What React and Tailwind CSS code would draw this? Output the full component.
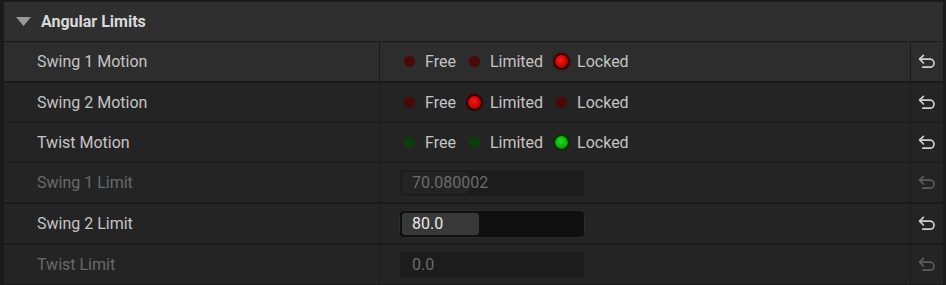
import React from "react";

const font = { fontFamily: "Roboto, 'Noto Sans', sans-serif" };

function ResetIcon({ disabled }) {
  return (
    <svg width="18" height="16" viewBox="0 0 18 16" fill="none" className={disabled ? "text-[#5c5c5c]" : "text-[#cfcfcf]"}>
      <path d="M5.4 1.4 L1.6 5.2 L5.4 9" stroke="currentColor" strokeWidth="1.7" strokeLinecap="round" strokeLinejoin="round" />
      <path d="M1.8 5.2 H12 A4 4 0 0 1 12 13.2 H4.8" stroke="currentColor" strokeWidth="1.7" strokeLinecap="round" />
    </svg>
  );
}

function Dot({ on, color }) {
  const red = color === "red";
  if (on) {
    return (
      <span className="w-[17px] h-[17px] flex items-center justify-center">
        <span
          className={
            red
              ? "w-[17px] h-[17px] rounded-full border-2 border-[#2a0303] bg-[radial-gradient(circle_at_45%_40%,#ff1a1a,#c40000_60%,#8a0000)] shadow-[0_0_2px_#6a0000]"
              : "w-[17px] h-[17px] rounded-full border-2 border-[#032a03] bg-[radial-gradient(circle_at_45%_40%,#22dd22,#0aa80a_60%,#067006)] shadow-[0_0_2px_#0a5a0a]"
          }
        />
      </span>
    );
  }
  return (
    <span className="w-[17px] h-[17px] flex items-center justify-center">
      <span className={red ? "w-[11px] h-[11px] rounded-full bg-[#4c0707]" : "w-[11px] h-[11px] rounded-full bg-[#0c3d0c]"} />
    </span>
  );
}

function Motion({ value, color }) {
  const opts = ["Free", "Limited", "Locked"];
  return (
    <div className="flex items-center gap-[10px] pl-[21px]">
      {opts.map((o) => (
        <div key={o} className="flex items-center gap-[7px]">
          <Dot on={o === value} color={color} />
          <span className="text-[16px] text-[#c4c4c4]">{o}</span>
        </div>
      ))}
    </div>
  );
}

function NumField({ value, fill, disabled }) {
  return (
    <div className="pl-[19px]">
      <div
        className={
          disabled
            ? "relative w-[186px] h-[28px] rounded-[4px] border border-[#262626] bg-[#1c1c1c] p-[2px]"
            : "relative w-[186px] h-[28px] rounded-[4px] border border-[#2c2c2c] bg-[#0f0f0f] p-[2px]"
        }
      >
        {fill > 0 && (
          <div
            className={disabled ? "h-full rounded-[3px] bg-[#232323]" : "h-full rounded-[3px] bg-[#383838]"}
            style={{ width: fill }}
          />
        )}
        <span
          className={
            disabled
              ? "absolute left-[12px] top-0 h-full flex items-center text-[16px] text-[#6c6c6c]"
              : "absolute left-[12px] top-0 h-full flex items-center text-[16px] text-[#e8e8e8]"
          }
        >
          {value}
        </span>
      </div>
    </div>
  );
}

function Row({ label, disabled, hover, children, className = "" }) {
  const bg = hover ? "bg-[#2d2d2d]" : "bg-[#242424]";
  return (
    <div className={"flex h-[39px] gap-px " + className}>
      <div className={"w-[375px] flex items-center pl-[33px] " + bg}>
        <span className={disabled ? "text-[16px] text-[#6a6a6a]" : "text-[16px] text-[#c4c4c4]"}>{label}</span>
      </div>
      <div className={"flex-1 flex items-center " + bg}>{children}</div>
      <div className={"w-[32px] flex items-center justify-center " + bg}>
        <ResetIcon disabled={disabled} />
      </div>
    </div>
  );
}

export default function App() {
  return (
    <div className="w-[946px] h-[285px] bg-[#1a1a1a] pt-[2px] pl-[4px] pr-[3px] overflow-hidden" style={font}>
      <div className="h-[39px] bg-[#2f2f2f] flex items-center">
        <svg width="15" height="9" viewBox="0 0 15 9" className="ml-[12px]">
          <path d="M0 0 H15 L7.5 9 Z" fill="#9a9a9a" />
        </svg>
        <span className="ml-[10px] text-[16px] font-bold text-[#d9d9d9]">Angular Limits</span>
      </div>
      <Row label="Swing 1 Motion" hover className="mt-px">
        <Motion value="Locked" color="red" />
      </Row>
      <Row label="Swing 2 Motion" className="mt-[2px]">
        <Motion value="Limited" color="red" />
      </Row>
      <Row label="Twist Motion" className="mt-px">
        <Motion value="Locked" color="green" />
      </Row>
      <Row label="Swing 1 Limit" disabled className="mt-px">
        <NumField value="70.080002" fill={66} disabled />
      </Row>
      <Row label="Swing 2 Limit" className="mt-[2px]">
        <NumField value="80.0" fill={77} />
      </Row>
      <Row label="Twist Limit" disabled className="mt-[2px]">
        <NumField value="0.0" fill={0} disabled />
      </Row>
    </div>
  );
}
